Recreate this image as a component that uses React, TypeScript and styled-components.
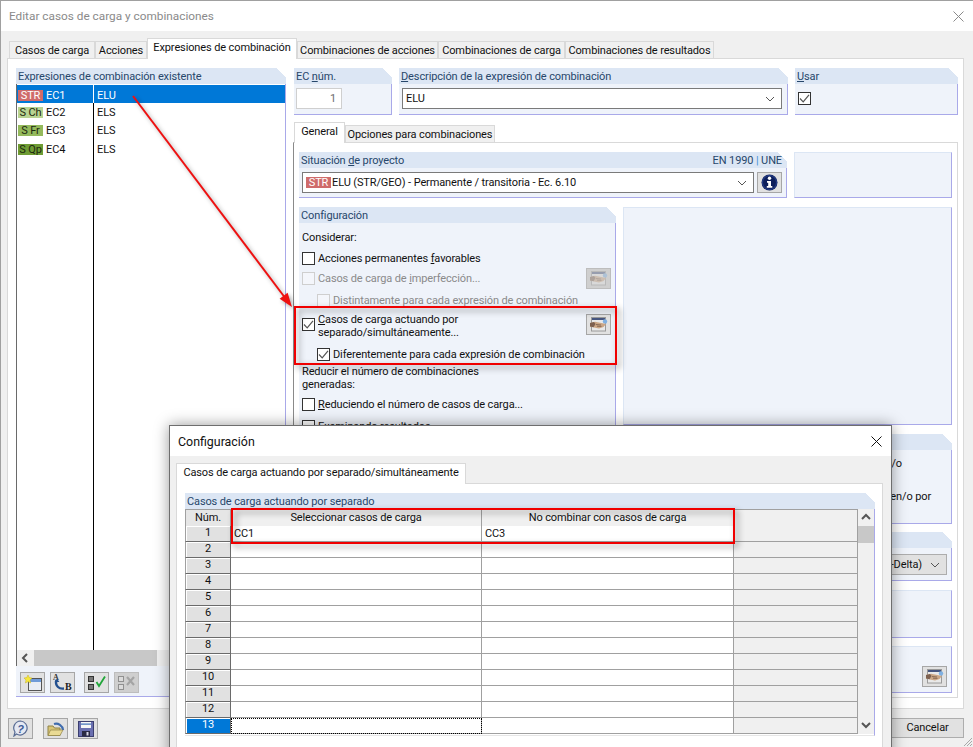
import React from "react";
import styled, { createGlobalStyle } from "styled-components";

const GlobalStyle = createGlobalStyle`
  html, body { margin: 0; padding: 0; background: #fff; }
  body { font-family: Roboto, "Liberation Sans", Arial, sans-serif; font-size: 11px; letter-spacing: -0.12px; color: #111; }
  u { text-underline-offset: 1px; }
`;

const Desktop = styled.div`
  position: relative;
  width: 973px;
  height: 747px;
  overflow: hidden;
`;

/* main window */
const MainWindow = styled.div`
  box-sizing: border-box;
  width: 973px;
  height: 747px;
  display: flex;
  flex-direction: column;
  background: #f0f0f0;
  border-top: 1px solid #a0a0a0;
  border-left: 1px solid #a0a0a0;
`;

const TitleBar = styled.div<{ $active?: boolean }>`
  flex: none;
  height: 30px;
  display: flex;
  align-items: center;
  justify-content: space-between;
  padding: 0 8px;
  font-size: ${p => (p.$active ? 12.4 : 11.8)}px;
  letter-spacing: 0;
  background: #fff;
  color: ${p => (p.$active ? "#111" : "#8a8a8a")};
`;

const CloseIcon = styled.svg`
  display: block;
  margin-right: 1px;
`;

const WindowBody = styled.div`
  flex: 1;
  display: flex;
  flex-direction: column;
  padding: 0 9px 0 6px;
  min-height: 0;
`;

const TabRow = styled.div<{ $top: number; $left: number }>`
  flex: none;
  display: flex;
  align-items: flex-end;
  height: 20px;
  margin-top: ${p => p.$top}px;
  padding-left: ${p => p.$left}px;
  position: relative;
  z-index: 1;
  margin-bottom: -1px;
`;

const Tab = styled.div<{ $w: number; $active?: boolean }>`
  box-sizing: border-box;
  width: ${p => p.$w}px;
  height: ${p => (p.$active ? 21 : 18)}px;
  display: flex;
  align-items: center;
  justify-content: center;
  white-space: nowrap;
  padding-bottom: ${p => (p.$active ? 3 : 0)}px;
  background: ${p => (p.$active ? "#fff" : "#f0f0f0")};
  border: 1px solid #d9d9d9;
  border-bottom: ${p => (p.$active ? "none" : "1px solid #d9d9d9")};
`;

const MainPanel = styled.div`
  box-sizing: border-box;
  flex: none;
  width: 957px;
  height: 651px;
  display: flex;
  gap: 7px;
  padding: 9px 0 0 8px;
  background: #fff;
  border: 1px solid #d9d9d9;
`;

/* blue group boxes */
const Group = styled.div<{ $w?: number; $h?: number }>`
  box-sizing: border-box;
  flex: none;
  display: flex;
  flex-direction: column;
  width: ${p => (p.$w ? `${p.$w}px` : "auto")};
  height: ${p => (p.$h ? `${p.$h}px` : "auto")};
`;

const GroupHeader = styled.div`
  flex: none;
  height: 16px;
  display: flex;
  align-items: center;
  justify-content: space-between;
  padding: 0 5px 0 2px;
  color: #27476b;
  white-space: nowrap;
  background: linear-gradient(225deg, transparent 7px, #dce6f4 7px);
`;

const Pipe = styled.span`
  color: #3d8fd6;
`;

const GroupBody = styled.div<{ $pad?: string }>`
  flex: 1;
  min-height: 0;
  box-sizing: border-box;
  display: flex;
  padding: ${p => p.$pad ?? "4px 3px"};
  background: #eff3fa;
  border-right: 1px solid #a9a9e9;
  border-bottom: 1px solid #a9a9e9;
`;

const PlainPanel = styled.div<{ $w?: number; $h: number }>`
  box-sizing: border-box;
  flex: none;
  display: flex;
  align-items: flex-end;
  justify-content: flex-end;
  padding: 0 4px 5px 0;
  width: ${p => (p.$w ? `${p.$w}px` : "auto")};
  height: ${p => p.$h}px;
  background: #eff3fa;
  border-top: 1px solid #dce6f4;
  border-left: 1px solid #dce6f4;
  border-right: 1px solid #a9a9e9;
  border-bottom: 1px solid #a9a9e9;
`;

/* left list */
const ListPanel = styled.div`
  flex: none;
  width: 270px;
  height: 629px;
  display: flex;
  flex-direction: column;
`;

const List = styled.div`
  flex: 1;
  min-height: 0;
  display: flex;
  flex-direction: column;
  background: #fff;
  border-left: 1px solid #6a6a6a;
  border-right: 1px solid #a9a9e9;
  padding-top: 1px;
`;

const ListRow = styled.div<{ $h?: number; $selected?: boolean }>`
  flex: ${p => (p.$h ? "none" : "1")};
  height: ${p => (p.$h ? `${p.$h}px` : "auto")};
  display: flex;
  align-items: center;
  background: ${p => (p.$selected ? "#0078d7" : "transparent")};
  color: ${p => (p.$selected ? "#fff" : "#111")};
`;

const ListKey = styled.div<{ $selected?: boolean }>`
  box-sizing: border-box;
  align-self: stretch;
  width: 77px;
  display: flex;
  align-items: center;
  gap: 3px;
  padding: 2px 0 0 1px;
  border-right: 1px solid ${p => (p.$selected ? "#fff" : "#000")};
`;

const ListValue = styled.div`
  padding: 2px 0 0 3px;
`;

const Badge = styled.span<{ $bg: string; $light?: boolean }>`
  flex: none;
  box-sizing: border-box;
  width: 25px;
  height: 11px;
  line-height: 11px;
  text-align: center;
  white-space: nowrap;
  background: ${p => p.$bg};
  color: ${p => (p.$light ? "#fff" : "#1d2a10")};
`;

const HScroll = styled.div`
  flex: none;
  height: 16px;
  display: flex;
  align-items: center;
  background: #f0f0f0;
  border-left: 1px solid #6a6a6a;
  border-right: 1px solid #a9a9e9;
`;

const ScrollArrow = styled.div`
  flex: none;
  width: 17px;
  height: 16px;
  display: flex;
  align-items: center;
  justify-content: center;
`;

const HThumb = styled.div`
  width: 123px;
  height: 16px;
  background: #c8c8c8;
`;

const ListToolbar = styled.div`
  flex: none;
  height: 31px;
  box-sizing: border-box;
  display: flex;
  align-items: flex-start;
  padding: 6px 0 0 4px;
  background: #eff3fa;
  border-right: 1px solid #a9a9e9;
  border-bottom: 1px solid #a9a9e9;
`;

const IconButton = styled.div<{ $ml?: number; $disabled?: boolean }>`
  box-sizing: border-box;
  flex: none;
  width: 25px;
  height: 21px;
  margin-left: ${p => p.$ml ?? 0}px;
  display: flex;
  align-items: center;
  justify-content: center;
  background: ${p => (p.$disabled ? "#cfcfcf" : "#e1e1e1")};
  border: 1px solid ${p => (p.$disabled ? "#bdbdbd" : "#a6a6a6")};
  & > svg { opacity: ${p => (p.$disabled ? 0.4 : 1)}; }
`;

/* right column */
const RightColumn = styled.div`
  flex: none;
  width: 665px;
  display: flex;
  flex-direction: column;
`;

const TopGroups = styled.div`
  flex: none;
  display: flex;
  gap: 7px;
  padding-left: 1px;
`;

const NumberInput = styled.div`
  box-sizing: border-box;
  width: 46px;
  height: 21px;
  line-height: 19px;
  text-align: right;
  padding-right: 5px;
  color: #6d6d6d;
  background: #fff;
  border: 1px solid #cfcfcf;
`;

const Select = styled.div<{ $w?: number; $grey?: boolean }>`
  box-sizing: border-box;
  flex: ${p => (p.$w ? "none" : "1")};
  width: ${p => (p.$w ? `${p.$w}px` : "auto")};
  height: 21px;
  display: flex;
  align-items: center;
  gap: 1px;
  padding: 0 6px 0 3px;
  white-space: nowrap;
  background: ${p => (p.$grey ? "#e1e1e1" : "#fff")};
  border: 1px solid ${p => (p.$grey ? "#adadad" : "#7a7a7a")};
`;

const SelectText = styled.span<{ $right?: boolean }>`
  flex: 1;
  min-width: 0;
  text-align: ${p => (p.$right ? "right" : "left")};
  padding-right: ${p => (p.$right ? 7 : 0)}px;
`;

const InnerTabRow = styled(TabRow)`
  padding-left: 1px;
`;

const InnerPanel = styled.div`
  box-sizing: border-box;
  flex: none;
  width: 665px;
  height: 556px;
  display: flex;
  flex-direction: column;
  gap: 9px;
  padding: 9px 0 0 5px;
  border-top: 1px solid #d9d9d9;
  border-left: 1px solid #8a8a8a;
  border-right: 1px solid #d9d9d9;
  border-bottom: 1px solid #d9d9d9;
`;

const PanelRow = styled.div`
  flex: none;
  display: flex;
  gap: 7px;
`;

const SideStack = styled.div`
  flex: none;
  width: 329px;
  height: 486px;
  display: flex;
  flex-direction: column;
  justify-content: space-between;
`;

const ConfigBody = styled.div`
  flex: 1;
  min-height: 0;
  box-sizing: border-box;
  padding: 8px 4px 0 3px;
  background: #eff3fa;
  border-right: 1px solid #a9a9e9;
  border-bottom: 1px solid #a9a9e9;
`;

const Note = styled.div<{ $mt?: number }>`
  margin-top: ${p => p.$mt ?? 0}px;
  line-height: 13px;
  white-space: nowrap;
`;

const OptionRow = styled.div<{ $mt: number; $indent?: boolean; $disabled?: boolean; $h?: number }>`
  display: flex;
  align-items: center;
  gap: 3px;
  height: ${p => p.$h ?? 14}px;
  margin-top: ${p => p.$mt}px;
  padding-left: ${p => (p.$indent ? 15 : 0)}px;
  line-height: 13px;
  white-space: nowrap;
  color: ${p => (p.$disabled ? "#8a8a8a" : "#111")};
`;

const TwoLines = styled.span`
  padding-top: 2px;
`;

const PushRight = styled.div`
  margin-left: auto;
`;

const CheckBox = styled.span<{ $disabled?: boolean }>`
  flex: none;
  box-sizing: border-box;
  width: 13px;
  height: 13px;
  display: inline-flex;
  align-items: center;
  justify-content: center;
  background: ${p => (p.$disabled ? "#f4f6fb" : "#fff")};
  border: 1px solid ${p => (p.$disabled ? "#cfcfcf" : "#333")};
`;

const HintLine = styled.div<{ $pr: number; $mt: number }>`
  text-align: right;
  white-space: nowrap;
  padding-right: ${p => p.$pr}px;
  margin-top: ${p => p.$mt}px;
  line-height: 14px;
`;

const HintBody = styled.div`
  flex: 1;
  box-sizing: border-box;
  padding-top: 7px;
  background: #eff3fa;
  border-right: 1px solid #a9a9e9;
  border-bottom: 1px solid #a9a9e9;
`;

/* footer */
const Footer = styled.div`
  flex: none;
  display: flex;
  align-items: flex-start;
  justify-content: space-between;
  padding: 9px 0 0 1px;
`;

const FooterLeft = styled.div`
  display: flex;
  align-items: center;
`;

const TextButton = styled.div`
  box-sizing: border-box;
  width: 73px;
  height: 20px;
  line-height: 18px;
  text-align: center;
  background: #e1e1e1;
  border: 1px solid #adadad;
`;

const ResizeGrip = styled.svg`
  position: absolute;
  right: 0;
  bottom: 0;
`;

/* overlays */
const ArrowLayer = styled.svg`
  position: absolute;
  left: 0;
  top: 0;
  pointer-events: none;
  filter: drop-shadow(2px 2px 2px rgba(0, 0, 0, 0.35));
`;

const Highlight = styled.div<{ $x: number; $y: number; $w: number; $h: number }>`
  box-sizing: border-box;
  position: absolute;
  left: ${p => p.$x}px;
  top: ${p => p.$y}px;
  width: ${p => p.$w}px;
  height: ${p => p.$h}px;
  border: 2px solid #f00000;
  filter: drop-shadow(3px 3px 3px rgba(0, 0, 0, 0.45));
  pointer-events: none;
`;

/* modal */
const Modal = styled.div`
  box-sizing: border-box;
  position: absolute;
  left: 169px;
  top: 425px;
  width: 723px;
  height: 340px;
  display: flex;
  flex-direction: column;
  background: #f0f0f0;
  border: 1px solid #6e6e6e;
  box-shadow: 0 0 14px rgba(0, 0, 0, 0.4);
`;

const ModalBody = styled.div`
  flex: 1;
  display: flex;
  flex-direction: column;
  padding: 0 0 0 6px;
`;

const ModalPanel = styled.div`
  box-sizing: border-box;
  flex: 1;
  width: 707px;
  padding: 9px 0 0 8px;
  background: #fff;
  border: 1px solid #d9d9d9;
`;

const TableGroup = styled.div`
  width: 690px;
  display: flex;
  flex-direction: column;
`;

const TableWrap = styled.div`
  display: flex;
  border-right: 1px solid #a9a9e9;
  border-bottom: 1px solid #e6e6e6;
  padding-bottom: 1px;
`;

const Table = styled.div`
  display: grid;
  grid-template-columns: 46px 251px 252px 124px;
  grid-template-rows: 17px repeat(13, 16px);
`;

const HeadCell = styled.div<{ $first?: boolean }>`
  box-sizing: border-box;
  text-align: center;
  line-height: 15px;
  border-top: 1px solid #a0a0a0;
  border-right: 1px solid #a0a0a0;
  border-left: ${p => (p.$first ? "1px solid #a0a0a0" : "none")};
  background: ${p => (p.$first ? "#e6e6e6" : "#f0f0f0")};
`;

const RowHead = styled.div<{ $selected?: boolean }>`
  box-sizing: border-box;
  text-align: center;
  line-height: 14px;
  background: ${p => (p.$selected ? "#0078d7" : "#e1e1e1")};
  color: ${p => (p.$selected ? "#fff" : "#111")};
  border-left: 1px solid #a0a0a0;
  border-right: 1px solid #6a6a6a;
  border-bottom: 1px solid #6a6a6a;
  box-shadow: inset 1px 1px 0 #fff;
`;

const Cell = styled.div<{ $grey?: boolean; $focus?: boolean }>`
  box-sizing: border-box;
  padding-left: 3px;
  line-height: 15px;
  background: ${p => (p.$grey ? "#f0f0f0" : "#fff")};
  border-right: 1px solid #a0a0a0;
  border-bottom: 1px solid #a0a0a0;
  outline: ${p => (p.$focus ? "1px dotted #000" : "none")};
  outline-offset: -1px;
`;

const VScroll = styled.div`
  flex: none;
  width: 16px;
  display: flex;
  flex-direction: column;
  background: #f0f0f0;
`;

const VArrow = styled.div`
  flex: none;
  height: 17px;
  display: flex;
  align-items: center;
  justify-content: center;
`;

const VThumb = styled.div`
  flex: none;
  height: 17px;
  background: #c8c8c8;
`;

const VSpacer = styled.div`
  flex: 1;
`;

/* drawn icons */
const Chevron = () => (
  <svg width="10" height="6" viewBox="0 0 10 6" style={{ flex: "none" }}>
    <polyline points="1,1 5,5 9,1" fill="none" stroke="#555" strokeWidth="1" />
  </svg>
);

const Check = () => (
  <svg width="11" height="11" viewBox="0 0 11 11">
    <polyline points="1,5.5 4.2,8.8 10,1.8" fill="none" stroke="#555" strokeWidth="1.2" />
  </svg>
);

const Caret = ({ dir }: { dir: "left" | "up" | "down" }) => {
  const pts = dir === "left" ? "6,1 2,5 6,9" : dir === "up" ? "1,6 5,2 9,6" : "1,2 5,6 9,2";
  return (
    <svg width="10" height="10" viewBox="0 0 10 10">
      <polyline points={pts} fill="none" stroke="#555" strokeWidth="2" />
    </svg>
  );
};

const HandIcon = () => (
  <svg width="19" height="15" viewBox="0 0 19 15">
    <rect x="2.5" y="0.5" width="14" height="13.5" fill="#e9e9e9" stroke="#9a9a9a" />
    <rect x="3" y="1" width="13" height="2" fill="#46557f" />
    <circle cx="16" cy="4.5" r="2.2" fill="#7fb0e2" />
    <path d="M1 6 L6 4.8 L11 5.8 L17 7 L14.5 10 L10 11.5 L5 10.5 L1 9.5 Z" fill="#cba685" />
    <path d="M1 6 L5 5 L6.5 7 L4.5 10.2 L1 9.5 Z" fill="#7c6050" />
    <path d="M7 7.5 L12 8 M8 9.2 L12.5 9.4" stroke="#6b5040" strokeWidth="0.7" />
  </svg>
);

const InfoIcon = () => (
  <svg width="17" height="17" viewBox="0 0 17 17">
    <circle cx="8.5" cy="8.5" r="8" fill="#0d1f5c" />
    <circle cx="8.5" cy="8.5" r="7" fill="none" stroke="#3c5ab0" strokeWidth="0.6" />
    <circle cx="8.5" cy="4.2" r="1.7" fill="#fff" />
    <path d="M6 7 H10 V12 H11.3 V13.8 H5.8 V12 H7.2 V8.7 H6 Z" fill="#fff" />
  </svg>
);

const NewIcon = () => (
  <svg width="18" height="16" viewBox="0 0 18 16">
    <rect x="4.5" y="3.5" width="13" height="12" fill="#e9edf4" stroke="#555" />
    <rect x="5" y="4" width="12" height="3" fill="#6f9bd8" />
    <path d="M4 0 L5.2 2.6 L8 3 L6 5 L6.6 8 L4 6.6 L1.4 8 L2 5 L0 3 L2.8 2.6 Z" fill="#f6e83c" stroke="#c8b020" strokeWidth="0.5" />
  </svg>
);

const SwapIcon = () => (
  <svg width="21" height="19" viewBox="0 0 21 19">
    <text x="1" y="7" fontFamily="Liberation Serif" fontWeight="700" fontSize="8" fill="#333">A</text>
    <text x="13" y="17" fontFamily="Liberation Serif" fontWeight="700" fontSize="10" fill="#222">B</text>
    <path d="M4.5 7 Q3 11 6 14 Q8 16 12 15.5" fill="none" stroke="#24508f" strokeWidth="2.4" />
    <path d="M5 5.5 L2.6 9 H7.4 Z" fill="#24508f" />
  </svg>
);

const ChecksIcon = ({ crossed }: { crossed?: boolean }) => (
  <svg width="20" height="17" viewBox="0 0 20 17">
    <rect x="1.5" y="2.5" width="5" height="5" fill={crossed ? "#eee" : "#777"} stroke="#333" />
    <rect x="1.5" y="10.5" width="5" height="5" fill={crossed ? "#eee" : "#777"} stroke="#333" />
    {crossed ? (
      <path d="M10 3 L17 11 M17 3 L10 11" stroke="#666" strokeWidth="2.2" />
    ) : (
      <path d="M9.5 8 L12 12 L18 2.5" fill="none" stroke="#21a63a" strokeWidth="1.8" />
    )}
  </svg>
);

const HelpIcon = () => (
  <svg width="17" height="17" viewBox="0 0 17 17">
    <path d="M8.5 1 A7 7 0 1 1 4.5 14 L2 16 L3 12 A7 7 0 0 1 8.5 1 Z" fill="#e4e8f2" stroke="#5a6c94" strokeWidth="1.2" />
    <text x="8.5" y="12.5" textAnchor="middle" fontFamily="Liberation Sans" fontWeight="700" fontStyle="italic" fontSize="11" fill="#3d5a96">?</text>
  </svg>
);

const OpenIcon = () => (
  <svg width="18" height="16" viewBox="0 0 18 16">
    <path d="M7 3 A7 7 0 0 1 16 9" fill="none" stroke="#3f6cae" strokeWidth="2.2" />
    <path d="M1 5 H6 L7.5 7 H13 V14.5 H1 Z" fill="#d9c676" stroke="#8f8247" />
    <path d="M1 14.5 L3.5 9 H16 L13 14.5 Z" fill="#e9da94" stroke="#8f8247" strokeWidth="0.7" />
  </svg>
);

const SaveIcon = () => (
  <svg width="16" height="16" viewBox="0 0 16 16">
    <rect x="0.5" y="0.5" width="15" height="15" fill="#6a6fb0" stroke="#3c3f70" />
    <rect x="3" y="1" width="10" height="6" fill="#f6f6f6" />
    <rect x="3" y="2.5" width="10" height="1.2" fill="#3c6fb8" />
    <rect x="4" y="10" width="8" height="5.5" fill="#2b2b44" />
    <rect x="8.5" y="11" width="2" height="3.5" fill="#d8d8e8" />
  </svg>
);

const expressions = [
  { tag: "STR", bg: "#cf6b6b", light: true, id: "EC1", kind: "ELU", h: 18 },
  { tag: "S Ch", bg: "#b9d492", light: false, id: "EC2", kind: "ELS", h: 17 },
  { tag: "S Fr", bg: "#94b95c", light: false, id: "EC3", kind: "ELS", h: 19 },
  { tag: "S Qp", bg: "#6f9c34", light: false, id: "EC4", kind: "ELS", h: 19 },
];

const mainTabs = [
  { label: "Casos de carga", w: 86 },
  { label: "Acciones", w: 52 },
  { label: "Expresiones de combinación", w: 150, active: true },
  { label: "Combinaciones de acciones", w: 141 },
  { label: "Combinaciones de carga", w: 127 },
  { label: "Combinaciones de resultados", w: 149 },
];

const rows = Array.from({ length: 13 }, (_, i) => i + 1);

export default function App() {
  return (
    <>
      <GlobalStyle />
      <Desktop>
        <MainWindow>
          <TitleBar>
            <span>Editar casos de carga y combinaciones</span>
            <CloseIcon width="11" height="11" viewBox="0 0 11 11">
              <path d="M0.5 0.5 L10.5 10.5 M10.5 0.5 L0.5 10.5" stroke="#8a8a8a" strokeWidth="1" />
            </CloseIcon>
          </TitleBar>
          <WindowBody>
            <TabRow $top={8} $left={2}>
              {mainTabs.map(t => (
                <Tab key={t.label} $w={t.w} $active={t.active}>
                  {t.label}
                </Tab>
              ))}
            </TabRow>
            <MainPanel>
              <ListPanel>
                <GroupHeader>Expresiones de combinación existente</GroupHeader>
                <List>
                  {expressions.map((e, i) => (
                    <ListRow key={e.id} $h={e.h} $selected={i === 0}>
                      <ListKey $selected={i === 0}>
                        <Badge $bg={e.bg} $light={e.light}>{e.tag}</Badge>
                        {e.id}
                      </ListKey>
                      <ListValue>{e.kind}</ListValue>
                    </ListRow>
                  ))}
                  <ListRow>
                    <ListKey />
                  </ListRow>
                </List>
                <HScroll>
                  <ScrollArrow><Caret dir="left" /></ScrollArrow>
                  <HThumb />
                </HScroll>
                <ListToolbar>
                  <IconButton><NewIcon /></IconButton>
                  <IconButton $ml={5}><SwapIcon /></IconButton>
                  <IconButton $ml={9}><ChecksIcon /></IconButton>
                  <IconButton $ml={5} $disabled><ChecksIcon crossed /></IconButton>
                </ListToolbar>
              </ListPanel>

              <RightColumn>
                <TopGroups>
                  <Group $w={98} $h={47}>
                    <GroupHeader>
                      <span>EC <u>n</u>úm.</span>
                    </GroupHeader>
                    <GroupBody $pad="4px 2px"><NumberInput>1</NumberInput></GroupBody>
                  </Group>
                  <Group $w={389} $h={47}>
                    <GroupHeader>
                      <span><u>D</u>escripción de la expresión de combinación</span>
                    </GroupHeader>
                    <GroupBody>
                      <Select $w={380}>
                        <SelectText>ELU</SelectText>
                        <Chevron />
                      </Select>
                    </GroupBody>
                  </Group>
                  <Group $w={163} $h={47}>
                    <GroupHeader>
                      <span><u>U</u>sar</span>
                    </GroupHeader>
                    <GroupBody $pad="8px 3px">
                      <CheckBox><Check /></CheckBox>
                    </GroupBody>
                  </Group>
                </TopGroups>

                <InnerTabRow $top={8} $left={1}>
                  <Tab $w={51} $active>General</Tab>
                  <Tab $w={150}>Opciones para combinaciones</Tab>
                </InnerTabRow>
                <InnerPanel>
                  <PanelRow>
                    <Group $w={488} $h={46}>
                      <GroupHeader>
                        <span>Situación <u>d</u>e proyecto</span>
                        <span>EN 1990 <Pipe>|</Pipe> UNE</span>
                      </GroupHeader>
                      <GroupBody>
                        <Select $w={452}>
                          <Badge $bg="#cf6b6b" $light>STR</Badge>
                          <SelectText>ELU (STR/GEO) - Permanente / transitoria - Ec. 6.10</SelectText>
                          <Chevron />
                        </Select>
                        <IconButton $ml={3}><InfoIcon /></IconButton>
                      </GroupBody>
                    </Group>
                    <PlainPanel $w={158} $h={46} />
                  </PanelRow>
                  <PanelRow>
                    <Group $w={317} $h={486}>
                      <GroupHeader>Configuración</GroupHeader>
                      <ConfigBody>
                        <Note>Considerar:</Note>
                        <OptionRow $mt={7}>
                          <CheckBox />
                          <span>Acciones permanentes <u>f</u>avorables</span>
                        </OptionRow>
                        <OptionRow $mt={3} $h={21} $disabled>
                          <CheckBox $disabled />
                          <span>Casos de carga de <u>i</u>mperfección...</span>
                          <PushRight>
                            <IconButton $disabled><HandIcon /></IconButton>
                          </PushRight>
                        </OptionRow>
                        <OptionRow $mt={4} $indent $disabled>
                          <CheckBox $disabled />
                          <span>Distintamente para cada expresión de combinación</span>
                        </OptionRow>
                        <OptionRow $mt={7} $h={21}>
                          <CheckBox><Check /></CheckBox>
                          <TwoLines><u>C</u>asos de carga actuando por<br />separado/simultáneamente...</TwoLines>
                          <PushRight>
                            <IconButton><HandIcon /></IconButton>
                          </PushRight>
                        </OptionRow>
                        <OptionRow $mt={12} $indent>
                          <CheckBox><Check /></CheckBox>
                          <span>Diferentemente para cada expresión de combinación</span>
                        </OptionRow>
                        <Note $mt={4}>Reducir el número de combinaciones<br />generadas:</Note>
                        <OptionRow $mt={6}>
                          <CheckBox />
                          <span><u>R</u>educiendo el número de casos de carga...</span>
                        </OptionRow>
                        <OptionRow $mt={8}>
                          <CheckBox />
                          <span>Examinando resultados</span>
                        </OptionRow>
                      </ConfigBody>
                    </Group>
                    <SideStack>
                      <PlainPanel $h={218} />
                      <Group $h={90}>
                        <GroupHeader />
                        <HintBody>
                          <HintLine $pr={49} $mt={0}>Carga y/o</HintLine>
                          <HintLine $pr={20} $mt={19}>Resultados en/o por</HintLine>
                        </HintBody>
                      </Group>
                      <Group $h={49}>
                        <GroupHeader />
                        <GroupBody $pad="6px 4px 0 3px">
                          <Select $grey>
                            <SelectText $right>Segundo orden (P-Delta)</SelectText>
                            <Chevron />
                          </Select>
                        </GroupBody>
                      </Group>
                      <PlainPanel $h={48} />
                      <PlainPanel $h={47}>
                        <IconButton><HandIcon /></IconButton>
                      </PlainPanel>
                    </SideStack>
                  </PanelRow>
                </InnerPanel>
              </RightColumn>
            </MainPanel>
            <Footer>
              <FooterLeft>
                <IconButton><HelpIcon /></IconButton>
                <IconButton $ml={10}><OpenIcon /></IconButton>
                <IconButton $ml={5}><SaveIcon /></IconButton>
              </FooterLeft>
              <TextButton>Cancelar</TextButton>
            </Footer>
          </WindowBody>
        </MainWindow>
        <ResizeGrip width="12" height="12" viewBox="0 0 12 12">
          <path d="M11 3 L3 11 M11 6 L6 11 M11 9 L9 11" stroke="#a8a8a8" strokeWidth="1" />
        </ResizeGrip>

        <ArrowLayer width="973" height="747" viewBox="0 0 973 747">
          <line x1="133" y1="96" x2="286" y2="299" stroke="#ee1111" strokeWidth="2" />
          <polygon points="292,307 287.6,292.8 279.6,298.8" fill="#ee1111" />
        </ArrowLayer>
        <Highlight $x={294} $y={306} $w={323} $h={59} />

        <Modal>
          <TitleBar $active>
            <span>Configuración</span>
            <CloseIcon width="11" height="11" viewBox="0 0 11 11">
              <path d="M0.5 0.5 L10.5 10.5 M10.5 0.5 L0.5 10.5" stroke="#111" strokeWidth="1" />
            </CloseIcon>
          </TitleBar>
          <ModalBody>
            <TabRow $top={8} $left={0}>
              <Tab $w={290} $active>Casos de carga actuando por separado/simultáneamente</Tab>
            </TabRow>
            <ModalPanel>
              <TableGroup>
                <GroupHeader>Casos de carga actuando por separado</GroupHeader>
                <TableWrap>
                  <Table>
                    <HeadCell $first>Núm.</HeadCell>
                    <HeadCell>Seleccionar casos de carga</HeadCell>
                    <HeadCell>No combinar con casos de carga</HeadCell>
                    <HeadCell />
                    {rows.map(n => (
                      <React.Fragment key={n}>
                        <RowHead $selected={n === 13}>{n}</RowHead>
                        <Cell $focus={n === 13}>{n === 1 ? "CC1" : ""}</Cell>
                        <Cell>{n === 1 ? "CC3" : ""}</Cell>
                        <Cell $grey />
                      </React.Fragment>
                    ))}
                  </Table>
                  <VScroll>
                    <VArrow><Caret dir="up" /></VArrow>
                    <VThumb />
                    <VSpacer />
                    <VArrow><Caret dir="down" /></VArrow>
                  </VScroll>
                </TableWrap>
              </TableGroup>
            </ModalPanel>
          </ModalBody>
        </Modal>
        <Highlight $x={231} $y={508} $w={504} $h={36} />
      </Desktop>
    </>
  );
}
